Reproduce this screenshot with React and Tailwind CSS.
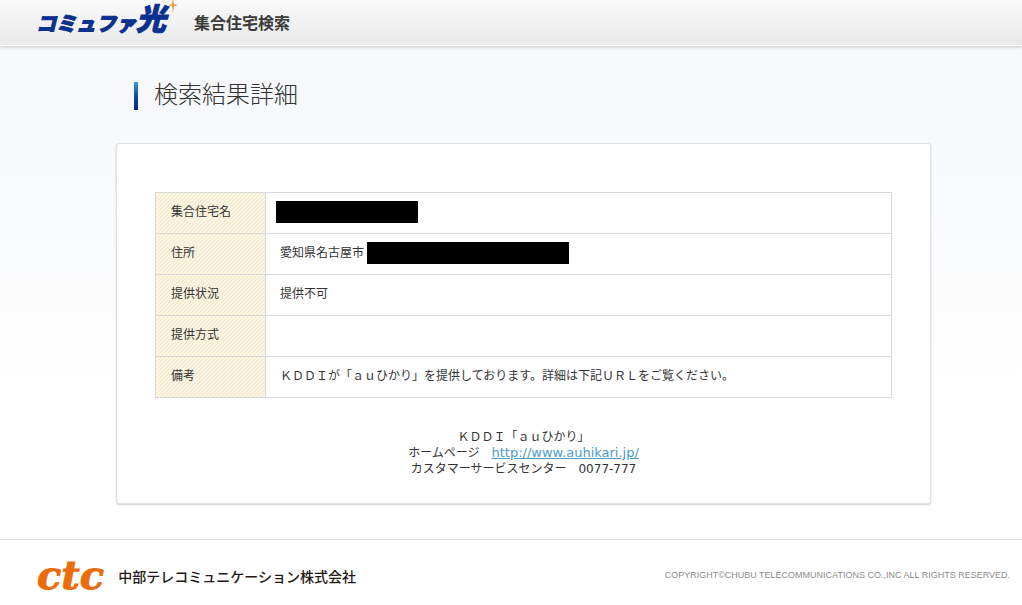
const rows = [
  { label: '集合住宅名', value: <span className="block -ml-1 w-[142px] h-[22px] bg-black" /> },
  {
    label: '住所',
    value: (
      <span className="flex items-center gap-[3px]">
        愛知県名古屋市
        <span className="w-[202px] h-[22px] bg-black" />
      </span>
    ),
  },
  { label: '提供状況', value: '提供不可' },
  { label: '提供方式', value: '' },
  { label: '備考', value: 'ＫＤＤＩが「ａｕひかり」を提供しております。詳細は下記ＵＲＬをご覧ください。' },
];

function Star() {
  return (
    <svg viewBox="0 0 12 14" className="absolute right-0 top-0 w-3 h-3.5" aria-hidden="true">
      <path d="M6 -2 L7 4 L11 5 L7 6.2 L6 13 L5 6.2 L1 5 L5 4 Z" fill="#e9a13b" />
    </svg>
  );
}

function Header() {
  return (
    <header className="h-[46px] bg-linear-to-b from-[#fafafa] to-[#e9e9e9] border-b border-white shadow-[0_1px_3px_rgba(0,0,0,0.2)] flex items-start pl-9">
      <a
        href="#"
        className="relative flex items-end h-[37px] w-[143px] text-[#0b318f] font-black italic whitespace-nowrap [-webkit-text-stroke:1px_#0b318f]"
      >
        <span className="text-[20px] leading-[26px]">コミュファ</span>
        <span className="text-[30px] leading-[34px]">光</span>
        <Star />
      </a>
      <p className="ml-[15px] pt-3 text-[16px] leading-6 font-bold text-[#3a3a3a]">集合住宅検索</p>
    </header>
  );
}

function Footer() {
  return (
    <footer className="border-t border-[#dddddd] h-[66px] pl-[37px] pr-3 pb-1 pt-2 flex items-center justify-between">
      <div className="flex items-center gap-3.5">
        <span className="font-['DejaVu_Serif',serif] font-bold italic text-[40px] leading-10 text-[#ea6d0b] [-webkit-text-stroke:1px_#ea6d0b]">
          ctc
        </span>
        <span className="pt-1 text-[14px] font-medium text-[#231815]">中部テレコミュニケーション株式会社</span>
      </div>
      <small className="font-['Liberation_Sans','Noto_Sans_CJK_JP',sans-serif] text-[9px] text-[#8c8c8c]">
        COPYRIGHT©CHUBU TELECOMMUNICATIONS CO.,INC ALL RIGHTS RESERVED.
      </small>
    </footer>
  );
}

export default function App() {
  return (
    <div
      lang="ja"
      className="min-h-screen flex flex-col bg-linear-to-b from-[#f4f6f9] to-white to-70% font-['DejaVu_Sans','Noto_Sans_CJK_JP',sans-serif] text-[12px] leading-4 text-[#333333]"
    >
      <Header />

      <main className="flex-1 pl-[116px] pr-[91px] pt-8">
        <div className="flex items-center gap-4 pl-[18px] h-8">
          <span className="w-1 h-7 mt-1 bg-linear-to-b from-[#3c9ad0] via-[#0f4f9f] to-[#06237a]" />
          <h1 className="font-['Noto_Sans_CJK_JP',sans-serif] text-[24px] leading-8 font-light pb-0.5">検索結果詳細</h1>
        </div>

        <section className="mt-[33px] mb-[33px] bg-white border border-[#e2e2e2] rounded-[3px] shadow-[0_1px_2px_rgba(0,0,0,0.2)] px-[38px] pt-12 pb-[26px]">
          <table className="w-full border-collapse">
            <tbody>
              {rows.map((row) => (
                <tr key={row.label} className="h-[41px]">
                  <th
                    scope="row"
                    className="w-[110px] border border-[#d9d9d9] pl-[15px] pb-0.5 text-left font-normal bg-[#fdf9ee] bg-[linear-gradient(135deg,transparent_42%,#ebd8a4_42%,#ebd8a4_58%,transparent_58%)] bg-size-[4px_4px]"
                  >
                    {row.label}
                  </th>
                  <td className="border border-[#d9d9d9] pl-[14px] pb-0.5">{row.value}</td>
                </tr>
              ))}
            </tbody>
          </table>

          <p className="mt-[31px] text-center">
            ＫＤＤＩ「ａｕひかり」
            <br />
            {'ホームページ　'}
            <a href="http://www.auhikari.jp/" className="text-[13px] leading-4 text-[#4a9cc9] underline">
              http://www.auhikari.jp/
            </a>
            <br />
            カスタマーサービスセンター　0077-777
          </p>
        </section>
      </main>

      <Footer />
    </div>
  );
}
